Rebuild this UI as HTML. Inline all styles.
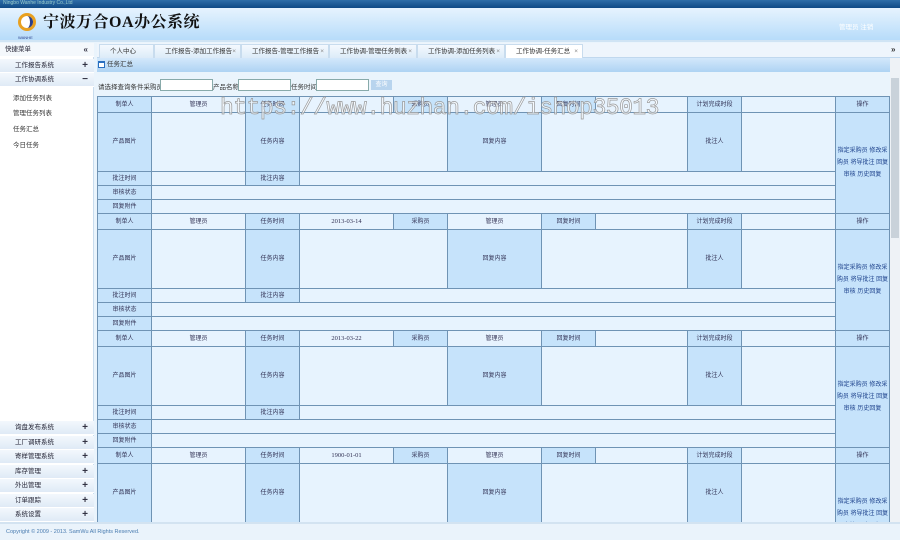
<!DOCTYPE html>
<html><head><meta charset="utf-8"><style>
*{margin:0;padding:0;box-sizing:border-box}
body{width:900px;height:540px;overflow:hidden;background:#eaf4fc;font-family:"Liberation Sans","Noto Sans CJK SC",sans-serif;font-size:7px;color:#333;position:relative}
.abs{position:absolute}
#top{left:0;top:0;width:900px;height:8px;background:linear-gradient(#2f6ea8,#0f4a86);color:#9cc;font-size:5px;line-height:7px;padding-left:3px}
#hdr{left:0;top:8px;width:900px;height:34px;background:linear-gradient(#e6f3fe,#b7dcfa);border-bottom:2px solid #d0e4f4}
#title{left:43px;top:9px;font-size:16px;font-weight:bold;color:#111;font-family:"Liberation Serif","Noto Serif CJK SC",serif;letter-spacing:0.5px}
#side{left:0;top:43px;width:94px;height:479px;background:#fff;border-right:1px solid #c8dcee}
.mi{position:absolute;left:0;width:94px;height:14px;background:linear-gradient(#f3f8fd,#dfeaf6);border-bottom:1px solid #fff;font-size:6.5px;line-height:14px;padding-left:15px;color:#223}
.mi b{position:absolute;right:6px;top:0;font-size:10px;font-weight:bold;color:#334}
.sub{position:absolute;left:13px;font-size:6.5px;color:#333}
#tabs{left:97px;top:43px;width:803px;height:15px;background:#eef5fc;border-bottom:1px solid #c0d8ee}
.tab{position:absolute;top:1px;height:14px;background:linear-gradient(#f4f9fe,#dcebf8);border:1px solid #c8dcee;border-bottom:none;font-size:6.5px;line-height:13px;padding-left:10px;color:#333}
.tab i{position:absolute;right:4px;font-style:normal;color:#888}
#ptitle{left:97px;top:58px;width:793px;height:14px;background:linear-gradient(#d3e8fb,#aed3f3);font-size:6.5px;line-height:14px;padding-left:10px}
#scroll{left:890px;top:58px;width:10px;height:464px;background:#eef2f6}
table{border-collapse:collapse;table-layout:fixed;width:792px}
td{border:1px solid #6f93b4;text-align:center;vertical-align:middle;font-size:6px;line-height:8px;color:#335;padding:0;overflow:hidden;white-space:nowrap}
.dt{font-family:"Liberation Serif",serif;font-size:6.5px}
.d{background:#c6e3fb}.l{background:#e7f3fe}
.op{font-size:6px;color:#1a3f8a;line-height:12px;white-space:normal;background:#c6e3fb}
#foot{left:0;top:522px;width:900px;height:18px;background:#eaf3fb;border-top:2px solid #d3e3f1;color:#4a7cb0;font-size:5.5px;line-height:16px;padding-left:6px}
#wm{left:220px;top:95px;font-family:"Liberation Mono",monospace;font-size:23px;color:rgba(255,255,255,0.6);-webkit-text-stroke:0.7px #999;white-space:nowrap;letter-spacing:-0.5px}
input{position:absolute;height:12px;border:1px solid #8aa;background:#fff}
</style></head><body>
<div id="top" class="abs">Ningbo Wanhe Industry Co.,Ltd</div>
<div id="hdr" class="abs"></div>
<svg class="abs" style="left:16px;top:12px" width="22" height="28"><circle cx="11" cy="10" r="9" fill="#e8a020"/><circle cx="11" cy="10" r="6" fill="#fff"/><path d="M11 4a6 6 0 0 1 0 12a3 6 0 0 0 0-12z" fill="#2a3f8a"/><text x="2" y="27" font-size="4" fill="#2a3f8a" font-family="Liberation Sans">WANHE</text></svg>
<div id="title" class="abs">宁波万合OA办公系统</div>
<div class="abs" style="left:839px;top:21px;color:#fff;font-size:6.5px">管理员 注销</div>
<div id="side" class="abs">
<div class="mi" style="top:0;height:14px;background:#f4f8fc;padding-left:5px">快捷菜单<b style="font-size:8px">«</b></div>
<div class="mi" style="top:16px">工作报告系统<b>+</b></div>
<div class="mi" style="top:30px">工作协调系统<b>−</b></div>
<div class="sub" style="top:49px">添加任务列表</div>
<div class="sub" style="top:64px">管理任务列表</div>
<div class="sub" style="top:80px">任务汇总</div>
<div class="sub" style="top:96px">今日任务</div>
<div class="mi" style="top:378px">询盘发布系统<b>+</b></div>
<div class="mi" style="top:393px">工厂调研系统<b>+</b></div>
<div class="mi" style="top:407px">寄样管理系统<b>+</b></div>
<div class="mi" style="top:422px">库存管理<b>+</b></div>
<div class="mi" style="top:436px">外出管理<b>+</b></div>
<div class="mi" style="top:451px">订单跟踪<b>+</b></div>
<div class="mi" style="top:465px">系统设置<b>+</b></div>
</div>
<div id="tabs" class="abs">
<div class="tab" style="left:2px;width:55px">个人中心</div>
<div class="tab" style="left:57px;width:87px">工作报告-添加工作报告<i>×</i></div>
<div class="tab" style="left:144px;width:88px">工作报告-管理工作报告<i>×</i></div>
<div class="tab" style="left:232px;width:88px">工作协调-管理任务例表<i>×</i></div>
<div class="tab" style="left:320px;width:88px">工作协调-添加任务列表<i>×</i></div>
<div class="tab" style="left:408px;width:78px;background:#fff">工作协调-任务汇总<i>×</i></div>
<div class="abs" style="left:794px;top:2px;font-size:8px;font-weight:bold">»</div>
</div>
<div id="ptitle" class="abs"><span style="position:absolute;left:1px;top:3px;width:7px;height:7px;border:1px solid #2a6fc0;background:#fff;border-top-width:2px"></span>任务汇总</div>
<div id="scroll" class="abs"><div style="position:absolute;left:1px;top:20px;width:8px;height:160px;background:#c9d2da"></div></div>
<div class="abs" style="left:98px;top:81px;font-size:6.5px">请选择查询条件采购员</div>
<input style="left:160px;top:79px;width:53px">
<div class="abs" style="left:213px;top:81px;font-size:6.5px">产品名称</div>
<input style="left:238px;top:79px;width:53px">
<div class="abs" style="left:291px;top:81px;font-size:6.5px">任务时间</div>
<input style="left:316px;top:79px;width:53px">
<div class="abs" style="left:371px;top:80px;width:21px;height:10px;background:#b8d4ee;color:#fff;font-size:6px;text-align:center;line-height:10px">查询</div>
<div class="abs" style="left:97px;top:96px;width:793px;height:426px;overflow:hidden">
<table>
<colgroup><col style="width:54px"><col style="width:94px"><col style="width:54px"><col style="width:94px"><col style="width:54px"><col style="width:94px"><col style="width:54px"><col style="width:92px"><col style="width:54px"><col style="width:94px"><col style="width:54px"></colgroup>
</table></div>
<div id="wm" class="abs">https://www.huzhan.com/ishop35013</div>
<div id="foot" class="abs">Copyright © 2009 - 2013. SamWu All Rights Reserved.</div>
<script>
var dates=['','2013-03-14','2013-03-22','1900-01-01'];var h='';
dates.forEach(function(d){h+='<tr style="height:16px"><td class="d">制单人</td><td class="l">管理员</td><td class="d">任务时间</td><td class="l dt">'+d+'</td><td class="d">采购员</td><td class="l">管理员</td><td class="d">回复时间</td><td class="l"></td><td class="d">计划完成时段</td><td class="l"></td><td class="d">操作</td></tr>'+
'<tr style="height:59px"><td class="d">产品图片</td><td class="l"></td><td class="d">任务内容</td><td class="l" colspan="2"></td><td class="d">回复内容</td><td class="l" colspan="2"></td><td class="d">批注人</td><td class="l"></td><td class="op" rowspan="4">指定采购员 修改采购员 将导批注 回复 审核 历史回复</td></tr>'+
'<tr style="height:14px"><td class="d">批注时间</td><td class="l"></td><td class="d">批注内容</td><td class="l" colspan="7"></td></tr>'+
'<tr style="height:14px"><td class="d">审核状态</td><td class="l" colspan="9"></td></tr>'+
'<tr style="height:14px"><td class="d">回复附件</td><td class="l" colspan="9"></td></tr>';});
document.querySelector('table').insertAdjacentHTML('beforeend',h);
</script>
</body></html>
